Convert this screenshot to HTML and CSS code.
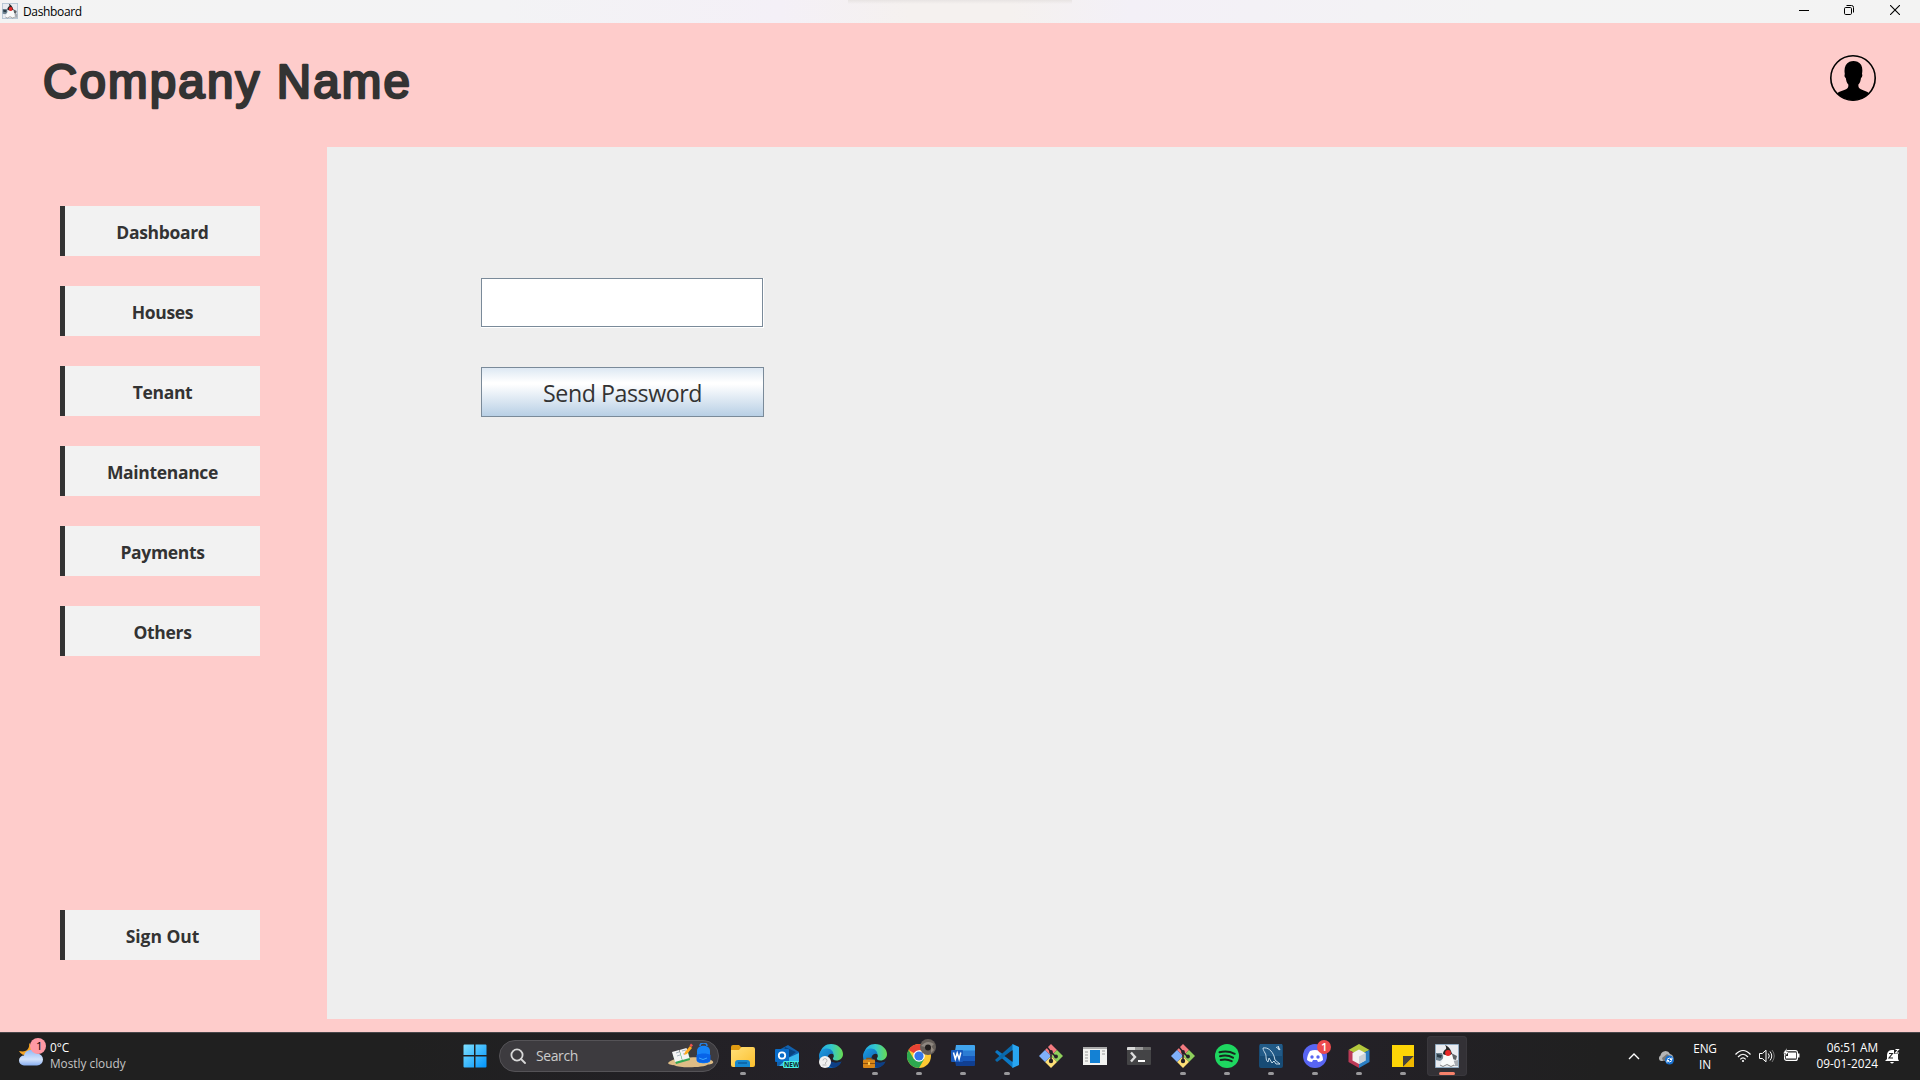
FILE: index.html
```html
<!DOCTYPE html>
<html lang="en">
<head>
<meta charset="utf-8">
<title>Dashboard</title>
<link rel="stylesheet" href="styles.css">
</head>
<body>
<svg class="defs" width="0" height="0">
  <defs>
    <linearGradient id="edgeBlue" x1="0" y1="0" x2="1" y2="1"><stop offset="0" stop-color="#1b9de2"/><stop offset="1" stop-color="#0b4c9c"/></linearGradient>
    <linearGradient id="edgeGreen" x1="0" y1="0" x2="1" y2="0"><stop offset="0" stop-color="#20a8e8"/><stop offset=".5" stop-color="#34c8cc"/><stop offset="1" stop-color="#68dc50"/></linearGradient>
    <linearGradient id="folder" x1="0" y1="0" x2="1" y2="1"><stop offset="0" stop-color="#ffe07a"/><stop offset="1" stop-color="#fcbf2d"/></linearGradient>
    <linearGradient id="win" x1="0" y1="0" x2="1" y2="1"><stop offset="0" stop-color="#7ee0ff"/><stop offset="1" stop-color="#0093fb"/></linearGradient>
    <linearGradient id="cloud" x1="0" y1="0" x2="0" y2="1"><stop offset="0" stop-color="#8fb8f5"/><stop offset=".6" stop-color="#d3e3fb"/><stop offset="1" stop-color="#88aef0"/></linearGradient>
    <symbol id="duke" viewBox="0 0 24 24">
      <path d="M.5.5h23v23H.5z" fill="#e9ebf0" stroke="#8fa9c0"/>
      <path d="M1 9l6 0 2 5-4 3-4-1z" fill="#6f8391"/>
      <path d="M2 10l5 1-1 3-4-1z" fill="#2c3d49"/>
      <path d="M16 9l6 3-1 4-4-1z" fill="#5d6265"/>
      <path d="M18 17l5-1v6h-5z" fill="#a7abb2"/>
      <path d="M9 10c3-1 6-1 8 0 1 4 2 8 3 11l-4 1.500-3-2-4 2-4-1.500c2-3 3-7 4-11z" fill="#fafafa"/>
      <path d="M5 21l3 1.500 4-2 4 2 3-1.500" fill="none" stroke="#777" stroke-width=".9"/>
      <path d="M10 1c3 1 6 4 7 9l-2 1H10l-2-1c0-2 1-4 3-5 .5-1.500 0-2.500-1-4z" fill="#262626"/>
      <circle cx="13" cy="9" r="2.900" fill="#e92828"/>
    </symbol>
    <symbol id="edge" viewBox="0 0 24 24">
      <path d="M1 10C2 3 7 0 12 0c7 0 12 5 12 10 0 4-3 6.500-6.500 6.500-3 0-4-1.500-3.500-2.500 1-1 1-2 .5-3.500C13 7 5 5 1 10z" fill="url(#edgeGreen)"/>
      <path d="M0 12c0-5 4-7.500 8-7.500 4 0 6.500 3 6.500 6-1-1.500-5-1-5.500 2-.7 5 7 8.500 13.500 5C20 22 16 24 12 24 5 24 0 19 0 12z" fill="url(#edgeBlue)"/>
      <path d="M9 12c-3 4 0 10 5 11.800C18 23.500 21 21 22.500 17.500 16 21 8.500 17 9 12z" fill="#0d3f86"/>
    </symbol>
    <symbol id="git" viewBox="0 0 24 24">
      <path d="M12 0l6 6-6 6-6-6z" fill="#f37a80"/><path d="M18 6l6 6-6 6-6-6z" fill="#8ed05c"/>
      <path d="M12 12l6 6-6 6-6-6z" fill="#fddf76"/><path d="M6 6l6 6-6 6-6-6z" fill="#7fb0fb"/>
      <path d="M8 3l4 5v10M12 8l5 5" stroke="#242128" stroke-width="1.500" fill="none"/>
      <circle cx="12" cy="8" r="1.900" fill="#242128"/><circle cx="12" cy="17" r="2.200" fill="#242128"/><circle cx="17" cy="12.500" r="1.900" fill="#242128"/>
    </symbol>
  </defs>
</svg>
<div class="screen">
  <header class="titlebar">
    <svg class="app-icon" width="16" height="16"><use href="#duke"/></svg>
    <span class="window-title">Dashboard</span>
    <div class="window-buttons">
      <svg width="10" height="10"><path d="M0 5.500h10" stroke="#000"/></svg>
      <svg width="10" height="10" fill="none" stroke="#000"><rect x=".5" y="2.500" width="7" height="7" rx="1.200"/><path d="M2.500.5h5a2 2 0 0 1 2 2v5"/></svg>
      <svg width="10" height="10"><path d="M0 0l10 10M10 0L0 10" stroke="#000" stroke-width="1.100"/></svg>
    </div>
  </header>

  <main class="app">
    <div class="brand-row">
      <svg class="brand" width="380" height="60"><text x="0" y="43" textLength="367" lengthAdjust="spacing">Company Name</text></svg>
      <svg class="avatar" width="46" height="46" viewBox="0 0 46 46">
        <circle cx="23" cy="23" r="22.200" fill="none" stroke="#000" stroke-width="1.600"/>
        <path d="M7 38.500c2-2.300 7-3 9.500-4.500 1.700-1 2-2.500 1.800-4.500-1.500-1.500-2.200-4-2.500-6.500-1.500-1-1.500-3-1-4-1-6 .5-10 4.700-12.200 2.500-1 5.500-1 8 0C32 9 33 13 32 19c.6 1 .4 3-1 4-.3 2.500-1 5-2.600 6.500-.2 2 .3 3.500 2 4.500 2.500 1.500 7 2.200 9 4.500A22.500 22.500 0 0 1 7 38.500z"/>
      </svg>
    </div>
    <div class="columns">
      <nav class="sidebar">
        <div class="nav-item">Dashboard</div>
        <div class="nav-item">Houses</div>
        <div class="nav-item">Tenant</div>
        <div class="nav-item">Maintenance</div>
        <div class="nav-item">Payments</div>
        <div class="nav-item">Others</div>
        <div class="nav-item sign-out">Sign Out</div>
      </nav>
      <section class="panel">
        <div class="field"><div class="field-inner"></div></div>
        <div class="send">Send Password</div>
      </section>
    </div>
  </main>

  <footer class="taskbar">
    <div class="weather">
      <svg width="30" height="30" viewBox="0 0 30 30">
        <path d="M10 5c1 5-2 10-10 8 3 6 15 7 16-2z" fill="#f5a524"/>
        <path d="M5 27.500a5 5 0 0 1 0-10 7 7 0 0 1 13-2 6 6 0 0 1 0 12z" fill="url(#cloud)"/>
        <circle cx="19" cy="8" r="8" fill="#ff99a4"/><text x="17" y="12.200" font-size="11.500">1</text>
      </svg>
      <div class="weather-text"><div class="temp">0°C</div><div class="sky">Mostly cloudy</div></div>
    </div>

    <svg class="start" width="24" height="24"><path fill="url(#win)" d="M1.500.5H11V11H.5V1.500a1 1 0 0 1 1-1zM12.500.5h10a1 1 0 0 1 1 1V11h-11zM.5 12.500H11v11H1.500a1 1 0 0 1-1-1zM12.500 12.500h11v10a1 1 0 0 1-1 1h-10z"/></svg>

    <div class="search">
      <svg width="16" height="16" fill="none" stroke="#d8d8d8" stroke-width="1.800"><circle cx="7" cy="7" r="5.600"/><path d="M11 11l4 4" stroke-linecap="round"/></svg>
      <span>Search</span>
      <svg class="scene" width="46" height="26" viewBox="0 0 46 26">
        <path d="M0 20c3-4 13-6 22-5.500 8-1 20 0 23 4 1 2-2 3-5 3-3 3-28 4-33 1-2-.4-6-.6-7-2.500z" fill="#dfbd86"/>
        <path d="M5 12l15-5 2 10-14 4z" fill="#35a853"/><path d="M4 9l7-2 3 10-7 2zM11.500 7l7-2 3 10-7 2z" fill="#f3f4f4"/>
        <path d="M8 10l3-1m-2 4l3-1m2-4l4-1m-3 4l4-1" stroke="#a7b6c0"/>
        <path d="M16 12l1-3 5-6 2 2-5 6z" fill="#ffad20"/><path d="M21.500 2.500L23 .5l2 1.800-1.500 1.700z" fill="#ef5350"/>
        <path d="M32 3c0-4 7-4 7 0" stroke="#2582e8" fill="none" stroke-width="1.500"/>
        <path d="M29 8c0-7 13-7 13 0v10c0 3-13 3-13 0z" fill="#1684f8"/><path d="M28.500 12c4-2 11-2 14 0v5.500c-2 3-12 3-14 0z" fill="#0763e8"/><path d="M31 15q4 3 8 0" stroke="#3ba7ff" fill="none"/>
      </svg>
    </div>

    <div class="apps">
      <div class="app-slot open"><svg width="24" height="24"><path d="M0 3a2 2 0 0 1 2-2h6l3 3h11v4H0z" fill="#e09b12"/><path d="M0 6h8l2.500-3H22a2 2 0 0 1 2 2v16a2 2 0 0 1-2 2H2a2 2 0 0 1-2-2z" fill="url(#folder)"/><path d="M4 23v-4a3 3 0 0 1 3-3h9a3 3 0 0 1 3 3v4z" fill="#1688d0"/><path d="M7 19h9" stroke="#0c5fa0" stroke-width="1.500"/></svg></div>
      <div class="app-slot"><svg width="24" height="24"><path d="M2 7l11-6 11 7v14H2z" fill="#1261ad"/><path d="M10 3l11 5-8 6-5-3z" fill="#0a4480"/><path d="M24 9v13H4l9-8z" fill="#37b9ee"/><rect y="5" width="14" height="13" rx="1" fill="#0a6cc8"/><circle cx="7" cy="11.500" r="3.200" fill="none" stroke="#fff" stroke-width="1.800"/><rect x="8" y="17" width="16" height="7" rx="1.500" fill="#45efe5"/><text class="new" x="9" y="22.700">NEW</text></svg></div>
      <div class="app-slot"><svg width="24" height="24"><use href="#edge"/><circle cx="6" cy="18" r="6" fill="#f1f1f1"/><path d="M4 16.500a2 2 0 1 1 2.500 2v1.500m-3 1h4" fill="none" stroke="#aaa" stroke-width=".8"/></svg></div>
      <div class="app-slot open"><svg width="24" height="24"><use href="#edge"/><path d="M4 16v-1.500h4V16" fill="none" stroke="#8f5715" stroke-width="1.500"/><rect y="15.500" width="12" height="8.500" rx="1" fill="#d98618"/><path d="M0 19.500h12" stroke="#8e510c"/><path d="M5 18h2v3H5z" fill="#ffc84b"/></svg></div>
      <div class="app-slot open"><svg width="30" height="30" class="chrome"><circle cx="12" cy="18" r="12" fill="#fdc932"/><path d="M12 18L1.600 12A12 12 0 0 1 22.400 12H12z" fill="#e94234"/><path d="M1.600 12A12 12 0 0 0 12 30l5.200-9L12 18l-5.200 3z" fill="#2da94f"/><circle cx="12" cy="18" r="5.800" fill="#fff"/><circle cx="12" cy="18" r="4.600" fill="#3478ec"/><circle cx="21" cy="9" r="8" fill="#665f5a"/><path d="M14 8q6-7 13-2l-3 3q-3-3-6 0z" fill="#8e8780"/><circle cx="21" cy="9.500" r="3" fill="#211e1e"/><path d="M24 8l3 4-3 3z" fill="#938980"/></svg></div>
      <div class="app-slot open"><svg width="24" height="24"><path d="M5 1h18a1 1 0 0 1 1 1v5H4z" fill="#41a5ee"/><path d="M4 6.500h20V12H4z" fill="#2b7cd3"/><path d="M4 12h20v5.500H4z" fill="#185abd"/><path d="M4 17h20v4a1 1 0 0 1-1 1H5z" fill="#103f91"/><rect y="6" width="12" height="12" rx="1" fill="#185abd"/><path d="M2.500 8.500l1.800 6.500 1.900-6 1.900 6 1.700-6.500" fill="none" stroke="#fff" stroke-width="1.500"/></svg></div>
      <div class="app-slot open"><svg width="24" height="24"><path d="M0 8l2-2 17 12-1 6L1 9z" fill="#0b79c6"/><path d="M0 16l2 2L19 6l-1-6L1 15z" fill="#0969ac"/><path d="M17.500 0L24 3v18l-6.500 3z" fill="#28a5f1"/><path d="M17.500 6L9.500 12l8 6z" fill="#242128"/></svg></div>
      <div class="app-slot"><svg width="24" height="24"><use href="#git"/></svg></div>
      <div class="app-slot"><svg width="24" height="24"><path d="M0 3h24v18H0z" fill="#f3f3f1"/><path d="M0 3h24v2H0z" fill="#aaa"/><path d="M7 6h10v13H7z" fill="#1481d4"/><path d="M2 8h3m-3 3h3m-3 3h3m-3 3h3M19 7h3m-3 3h3" stroke="#999"/></svg></div>
      <div class="app-slot"><svg width="24" height="24"><rect y="3" width="24" height="18" rx="1" fill="#444446"/><path d="M0 6V4a1 1 0 0 1 1-1h7v3z" fill="#d8d8d8"/><path d="M8 3h8v3H8z" fill="#999"/><path d="M16 3h7a1 1 0 0 1 1 1v2h-8z" fill="#666"/><path d="M4 8.500l4 4.500-4 4.500" fill="none" stroke="#ddd" stroke-width="2.400"/><path d="M11 17h7" stroke="#fff" stroke-width="2"/></svg></div>
      <div class="app-slot open"><svg width="24" height="24"><use href="#git"/></svg></div>
      <div class="app-slot open"><svg width="24" height="24"><circle cx="12" cy="12" r="12" fill="#1ed760"/><path d="M4.500 8.300q8-2.300 15.200 1.500M5 12.300q7-2 13 1.400M5.700 16q6-1.600 11 1.200" stroke="#19251d" stroke-width="2" stroke-linecap="round" fill="none"/></svg></div>
      <div class="app-slot open"><svg width="24" height="24"><rect width="24" height="24" rx="2" fill="#174b75"/><path d="M1 0h22v12H1z" fill="#225a87"/><path d="M4 4c5-1 9 3 11 8l1 4 5 4-4 0-2-3-2 2-3-5-1 4c-3-2-1-6-3-9-1-2-2-3-2-5zM17 3l4 3-2-4 1 4" fill="none" stroke="#d9eaf5" stroke-width=".9"/></svg></div>
      <div class="app-slot open"><svg class="discord" width="28" height="28"><circle cx="12" cy="16" r="12" fill="#5865f2"/><path d="M7 11q5-2 10 0c2 3 3 6 3 9q-2 2-5 2l-1-2H10l-1 2q-3 0-5-2c0-3 1-6 3-9z" fill="#fff"/><circle cx="9" cy="17" r="1.700" fill="#5865f2"/><circle cx="15" cy="17" r="1.700" fill="#5865f2"/><circle cx="21" cy="7" r="7" fill="#ed4b4d"/><text class="badge-count" x="18" y="11.300">1</text></svg></div>
      <div class="app-slot open"><svg width="24" height="24"><path d="M12 0l10.500 6-10.500 5L1.500 6z" fill="#b3c83c"/><path d="M1.500 6L12 11v13L1.500 18z" fill="#bd3a57"/><path d="M22.500 6v12L12 24V11z" fill="#2b7fc4"/><path d="M12 5.500l6.500 3.500v7.500L12 20l-6.500-3.500V9z" fill="#f1f2f0"/><path d="M12 12.500l6.500-3.500v7.500L12 20z" fill="#cbd2d7"/></svg></div>
      <div class="app-slot open"><svg width="24" height="24"><path d="M1 1h22v22H1z" fill="#fdd506"/><path d="M12 12h11L12 23z" fill="#45433e"/><path d="M23 12v11H12z" fill="#f0b800"/></svg></div>
      <div class="app-slot open active"><svg width="24" height="24"><use href="#duke"/></svg></div>
    </div>

    <div class="tray">
      <svg class="chevron" width="12" height="8"><path d="M1 7l5-5 5 5" fill="none" stroke="#fff" stroke-width="1.400"/></svg>
      <svg class="sync" width="16" height="16"><path d="M3 11a3 3 0 0 1-.5-5.500A5 5 0 0 1 12 4a4 4 0 0 1 2 7z" fill="#b5b5b5"/><path d="M5 11L4 8l5-4 4 3v4z" fill="#777"/><circle cx="11.500" cy="10" r="4.500" fill="#1870cf"/><path d="M9 9.500q2-3 5 0m0-2v2h-2m2 1q-2 3-5 0m0 2v-2h2" stroke="#fff" fill="none"/></svg>
      <div class="language">ENG<br>IN</div>
      <svg class="wifi" width="16" height="14" fill="none" stroke="#fff" stroke-width="1.200"><path d="M.5 5.500q7.500-8 15 0M3 8q5-5.500 10 0M5.300 10.300q2.700-3 5.400 0"/><circle cx="8" cy="12" r="1.100" fill="#fff" stroke="none"/></svg>
      <svg class="volume" width="16" height="14" fill="none" stroke="#fff"><path d="M.5 4.500h2.800L7 1.200v11.600L3.300 9.500H.5z"/><path d="M9.300 4.500q2 2.500 0 5M11 2.500q3.500 4.500 0 9"/><path d="M13 1q4.500 6 0 12" stroke="#777"/></svg>
      <svg class="battery" width="17" height="14"><rect x="1.600" y="2.600" width="12.800" height="9.800" rx="2" fill="none" stroke="#fff" stroke-width="1.200"/><path d="M5 4.500h8v6H3V8h2zM15 5.500h1.500v4H15z" fill="#fff"/><path d="M4 0L0 5.500h2.500L2 8.500l4-5H3.600z" fill="#fff" stroke="#202020" stroke-width=".4"/></svg>
      <div class="clock">06:51 AM<br>09-01-2024</div>
      <svg class="bell" width="15" height="17"><path d="M2 11V7a5 5 0 0 1 6-5h1v4h4v5l1 2H0z" fill="#fff"/><path d="M5 14h4q-2 3-4 0z" fill="#fff"/><path d="M4 5.500h3.500L4 10h4" fill="none" stroke="#222" stroke-width="1.100"/><path d="M10.500 1.500h3L10.500 5h3.500" fill="none" stroke="#fff" stroke-width="1.100"/></svg>
    </div>
  </footer>
</div>
</body>
</html>
```
FILE: styles.css
```css
* { box-sizing: border-box; }
body { margin: 0; font-family: "Open Sans", "Noto Sans", sans-serif; }
svg { display: block; flex: none; }
.defs { position: absolute; }
.screen { width: 1920px; height: 1080px; display: flex; flex-direction: column; overflow: hidden; }

.titlebar {
  height: 23px; flex: none; display: flex; align-items: center; padding-left: 2px;
  background: linear-gradient(#e8e4e3, transparent) 848px 0 / 224px 4px no-repeat,
    linear-gradient(90deg, #f3f3f3 0, #f3f3f5 500px, #f4f0f7 780px, #f5f1ef 910px, #f5f1ef 1010px, #f3f0f7 1130px, #f3f3f4 1500px, #f3f3f3);
}
.app-icon { margin-top: -1px; }
.window-title { margin-left: 5px; font-size: 12px; color: #000; letter-spacing: -.35px; }
.window-buttons { margin-left: auto; display: flex; gap: 35px; padding: 0 20px 3px 0; }
.window-buttons svg:nth-child(-n+2) { margin: 0 1px 0 -1px; }

.app { flex: 1; background: #fecccb; display: flex; flex-direction: column; padding: 0 13px 13px 0; }
.brand-row { height: 124px; flex: none; display: flex; justify-content: space-between; padding: 32px 31px 0 43px; }
.brand text {
  font: 47.500px "Liberation Sans", sans-serif; fill: #333; stroke: #333;
  stroke-width: 2.500px; stroke-linejoin: round; stroke-linecap: round;
}
.columns { flex: 1; display: flex; }
.sidebar { width: 327px; display: flex; flex-direction: column; gap: 30px; padding: 59px 67px 59px 60px; }
.nav-item {
  height: 50px; border-left: 5px solid #333; background: #f2f2f2; color: #333;
  display: flex; align-items: center; justify-content: center; padding-top: 1px;
  font-size: 17.500px; font-weight: 700; letter-spacing: -.33px;
}
.sign-out { margin-top: auto; letter-spacing: -.05px; }
.panel { flex: 1; background: #eee; padding: 131px 0 0 154px; }
.field { width: 283px; height: 50px; background: #fff; padding: 0 1px 1px 0; }
.field-inner { height: 49px; border: 1px solid #7a8a99; }
.send {
  width: 283px; height: 50px; margin-top: 39px; border: 1px solid #7a8a99;
  background: linear-gradient(#dde8f3, #fff 30%, #fff 34%, #b8cfe5);
  color: #333; font-size: 23.200px; letter-spacing: -.45px; display: flex; align-items: center; justify-content: center; padding-top: 1px;
}

.taskbar {
  height: 48px; flex: none; display: flex; color: #fff; border-top: 1px solid #48464a;
  background: linear-gradient(90deg, #202020 0, #202020 400px, #242128 850px, #242128 1300px, #202020 1600px);
}
.weather { width: 462px; padding: 5px 0 0 19px; display: flex; gap: 1px; font-size: 11.800px; line-height: 16px; }
.weather svg { font-family: "Open Sans", sans-serif; }
.weather-text { padding-top: 1px; }
.sky { color: #c5c5c5; }
.start { margin: 11px 0 0 1px; }
.search {
  width: 220px; height: 32px; margin: 7px 2px 0 12px; border: 1px solid #555357; border-radius: 16px;
  background: #3d3b3f; display: flex; align-items: center; padding: 0 4px 0 11px; font-size: 14px; color: #ccc;
}
.search svg:first-child { margin-left: -1px; }
.search span { margin: -2px 0 0 10px; letter-spacing: -.4px; }
.scene { margin: 0 0 0 auto; }
.apps { display: flex; }
.app-slot { width: 44px; height: 47px; padding-top: 11px; display: flex; flex-direction: column; align-items: center; }
.open::after { content: ""; width: 6px; height: 3px; margin-top: 4px; border-radius: 2px; background: #99989b; flex: none; }
.active { width: 40px; height: 40px; margin: 3px 2px 0; padding-top: 8px; border-radius: 4px; background: #333136; box-shadow: inset 0 0 0 1px #3a383d; }
.active::after { width: 16px; background: #f7826b; }
.new { font: 700 6.500px "Open Sans", sans-serif; fill: #102a30; }
.badge-count { font: 600 11.500px "Open Sans", sans-serif; fill: #fff; }
.chrome { margin: -6px -6px 0 0; }
.discord { margin: -4px -4px 0 0; }
.tray { margin-left: auto; display: flex; padding-right: 20px; font-size: 11.800px; line-height: 16px; }
.chevron { margin: 19px 18px 0 0; }
.sync { margin: 17px 17px 0 0; }
.language { width: 28px; margin: 7px 16px 0 0; text-align: center; letter-spacing: -.2px; }
.wifi { margin: 16px 8px 0 0; }
.volume { margin: 16px 8px 0 0; }
.battery { margin: 15px 14px 0 0; }
.clock { width: 64px; margin-right: 7px; padding-top: 6px; text-align: right; white-space: nowrap; }
.bell { margin-top: 15px; }
```
